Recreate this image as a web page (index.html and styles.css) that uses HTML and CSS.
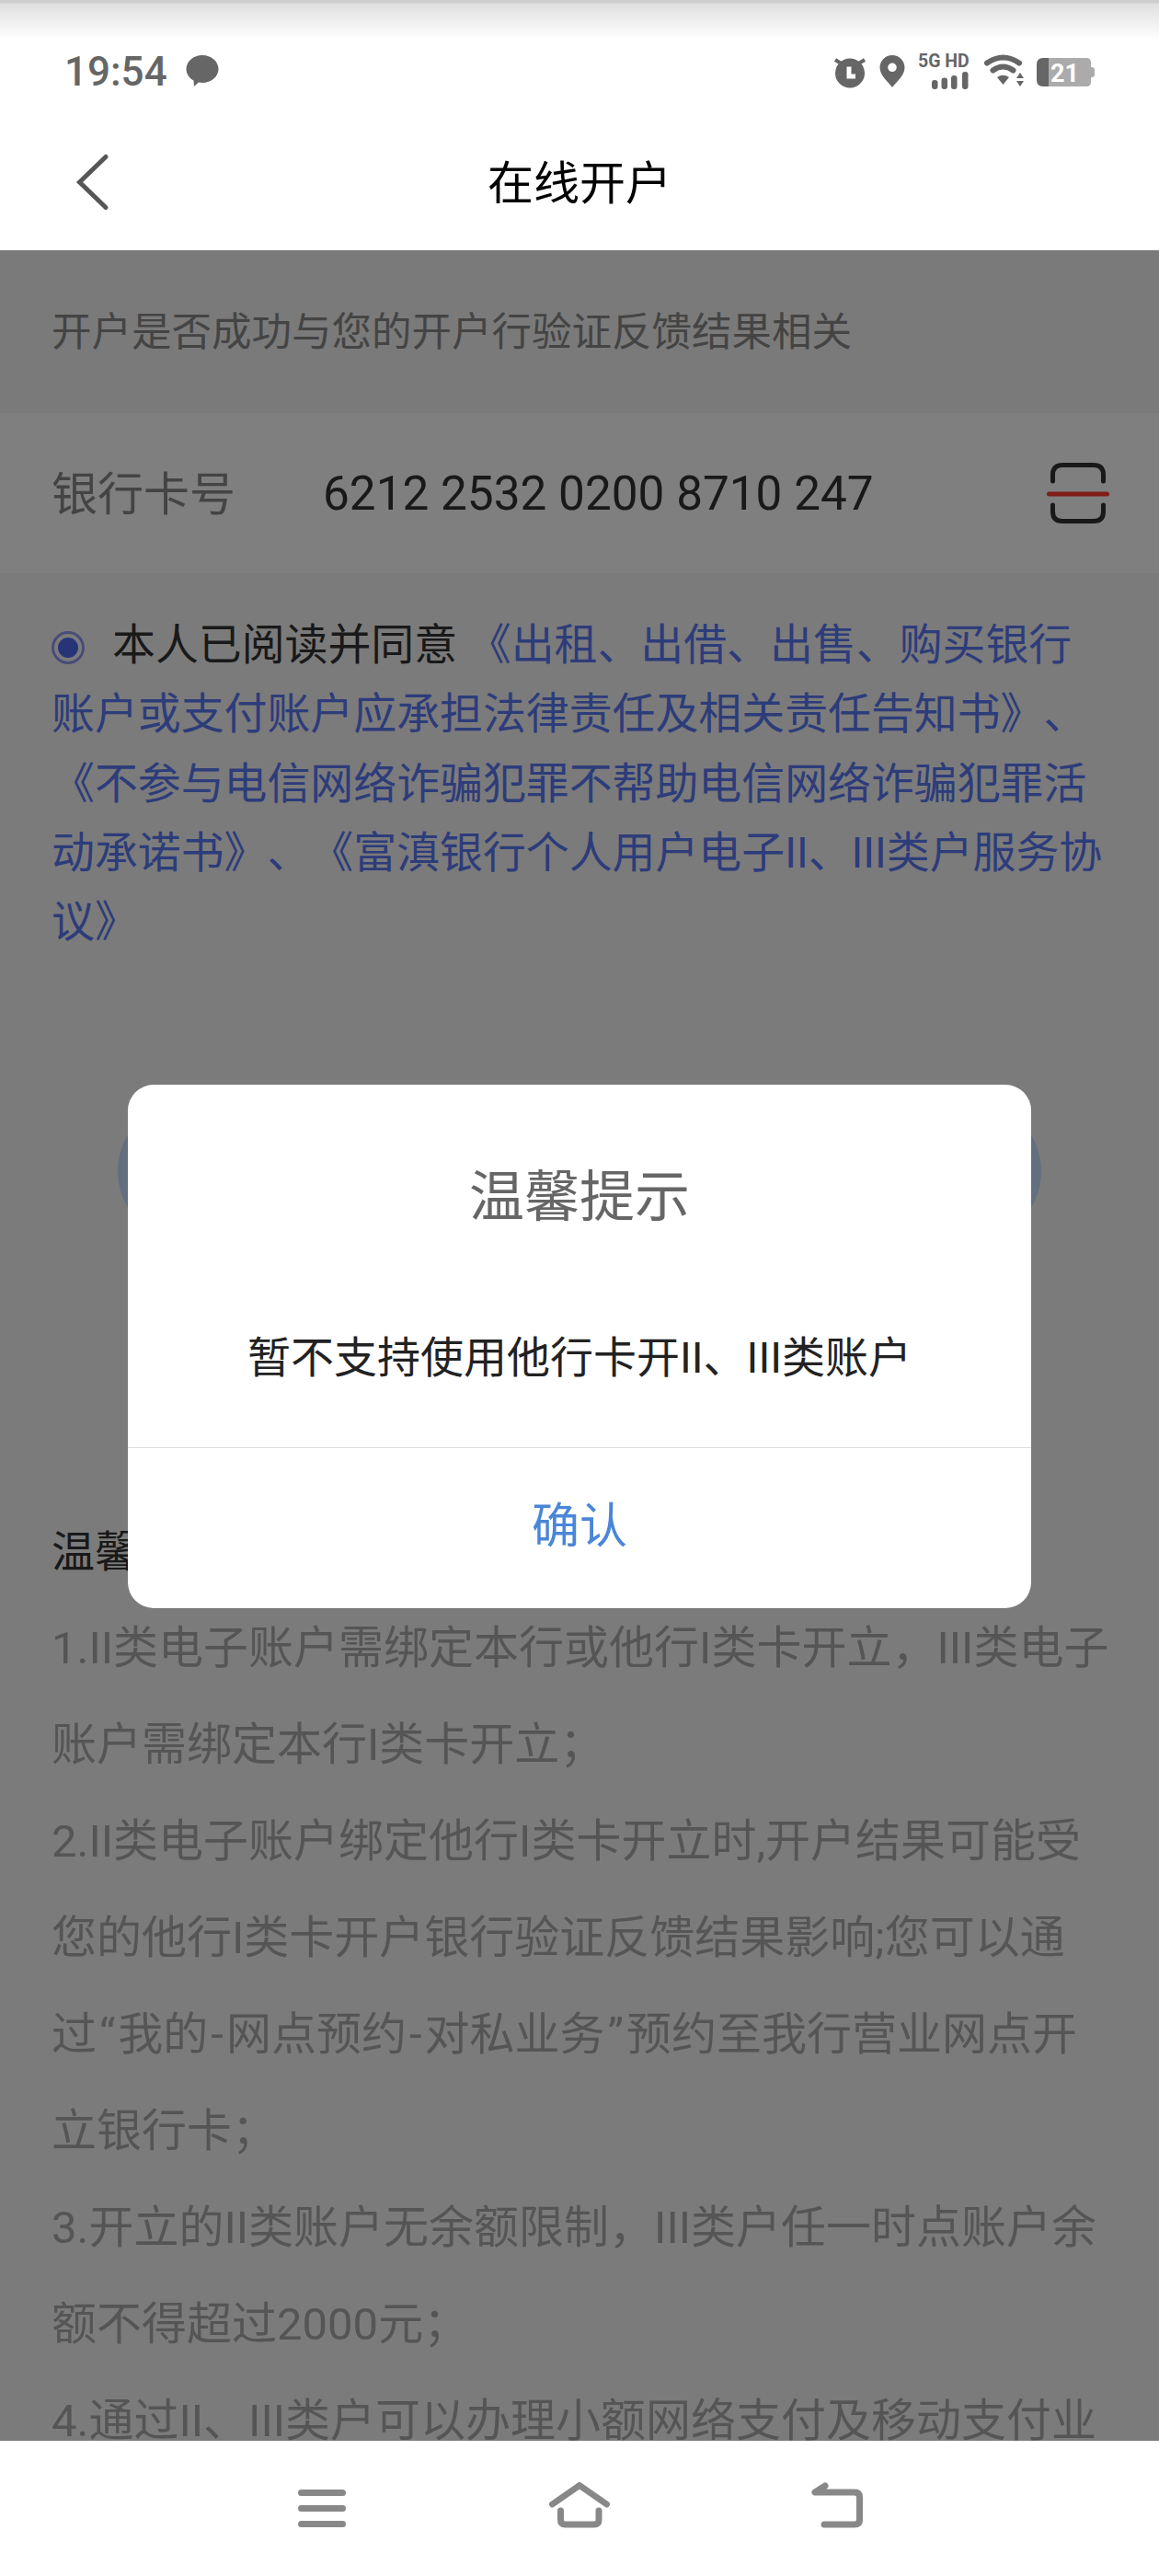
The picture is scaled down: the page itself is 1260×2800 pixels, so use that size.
FILE: index.html
```html
<!DOCTYPE html>
<html lang="zh-CN">
<head>
<meta charset="utf-8">
<title>在线开户</title>
<link rel="stylesheet" href="styles.css">
</head>
<body>
<div class="page">
  <header class="status">
    <span class="time">19:54</span>
    <svg class="ico-bubble" width="36" height="40" viewBox="0 0 36 40"><path class="fill-grey" d="M18 2C27.6 2 35.500 8.700 35.500 17C35.500 25.300 27.600 32 18 32C16.500 32 15 31.800 13.800 31.500L9 36L8.500 29.500C3.700 26.800 .5 22.200 .5 17C.5 8.700 8.400 2 18 2Z"/></svg>
    <div class="status-right">
      <svg width="38" height="40" viewBox="0 0 38 40"><circle class="fill-grey" cx="18" cy="21.500" r="16"/><path class="ears" d="M2 7L8.500 11M34 7L27.500 11"/><path class="clock-hand" d="M17 14.500V25H24"/></svg>
      <svg width="28" height="40" viewBox="0 0 28 40"><path class="fill-grey" fill-rule="evenodd" d="M14 2C21.500 2 27.500 8 27.500 15.500C27.500 24 19 30.500 14 37C9 30.500 .5 24 .5 15.500C.5 8 6.500 2 14 2ZM14 10.500A4.800 4.800 0 1 0 14 20.100A4.800 4.800 0 1 0 14 10.500Z"/></svg>
      <svg class="net-ico" width="60" height="40" viewBox="0 0 60 40"><text class="net" x="0" y="14.500">5G HD</text><rect class="fill-grey" x="15" y="29" width="6.500" height="10" rx="3"/><rect class="fill-grey" x="25.500" y="26.500" width="6.500" height="12.500" rx="3"/><rect class="fill-grey" x="36" y="24" width="6.500" height="15" rx="3"/><rect class="fill-grey" x="48" y="20" width="6.500" height="19" rx="3"/></svg>
      <svg width="44" height="40" viewBox="0 0 44 40"><path class="wifi" d="M3 10.500Q20.500 -1.500 38 10.500M9.500 18.500Q20.500 10.500 31.500 18.500"/><path class="fill-grey" d="M14 26Q20.500 21.500 27 26L20.500 34ZM35 27L39 21L43 27ZM35 30H43L39 36Z"/></svg>
      <svg width="64" height="40" viewBox="0 0 64 40"><path class="batt-body" d="M14 5H55Q60 5 60 10V31Q60 36 55 36H14Z"/><path class="fill-grey" d="M14 5H8Q1 5 1 12V29Q1 36 8 36H14Z"/><path class="batt-body" d="M60 15H61Q64 15 64 18V23Q64 26 61 26H60Z"/><text class="batt-text" x="16" y="31">21</text></svg>
    </div>
  </header>

  <nav class="nav">
    <svg class="back" width="40" height="64" viewBox="0 0 40 64"><path d="M35 4.500L6.500 32L35 59.500"/></svg>
    <h1 class="title">在线开户</h1>
  </nav>

  <main class="content">
    <p class="tip">开户是否成功与您的开户行验证反馈结果相关</p>
    <div class="card-row">
      <span class="card-label">银行卡号</span>
      <span class="card-no">6212 2532 0200 8710 247</span>
      <svg class="scan" width="68" height="68" viewBox="0 0 68 68"><path class="scan-frame" d="M6.500 21V14Q6.500 3.500 17 3.500H51Q61.500 3.500 61.500 14V21M6.500 47V54Q6.500 64.500 17 64.500H51Q61.500 64.500 61.500 54V47"/><path class="scan-line" d="M2.500 35H65.500"/></svg>
    </div>
    <p class="agree"><svg class="radio" width="36" height="36" viewBox="0 0 36 36"><circle class="radio-ring" cx="18" cy="18" r="16.500"/><circle class="radio-dot" cx="18" cy="18" r="11"/></svg>本人已阅读并同意 <a class="link">《出租、出借、出售、购买银行账户或支付账户应承担法律责任及相关责任告知书》、《不参与电信网络诈骗犯罪不帮助电信网络诈骗犯罪活动承诺书》、《富滇银行个人用户电子II、III类户服务协议》</a></p>
    <div class="submit"></div>
    <h2 class="notice-title">温馨提示</h2>
    <div class="notice">
      <p>1.II类电子账户需绑定本行或他行I类卡开立，III类电子<br>账户需绑定本行I类卡开立；</p>
      <p>2.II类电子账户绑定他行I类卡开立时,开户结果可能受<br>您的他行I类卡开户银行验证反馈结果影响;您可以通<br>过<span class="punct">“</span>我的<span class="punct">-</span>网点预约<span class="punct">-</span>对私业务<span class="punct">”</span>预约至我行营业网点开<br>立银行卡；</p>
      <p>3.开立的II类账户无余额限制，III类户任一时点账户余<br>额不得超过2000元；</p>
      <p>4.通过II、III类户可以办理小额网络支付及移动支付业</p>
    </div>
    <div class="scrim">
      <section class="dialog">
        <div class="dialog-main">
          <h3 class="dialog-title">温馨提示</h3>
          <p class="dialog-text">暂不支持使用他行卡开II、III类账户</p>
        </div>
        <div class="dialog-btn">确认</div>
      </section>
    </div>
  </main>

  <footer class="softkeys">
    <svg class="key" width="70" height="52" viewBox="0 0 70 52"><path d="M12.500 11.500H57.500M12.500 28.500H57.500M12.500 45.500H57.500"/></svg>
    <svg class="key" width="70" height="52" viewBox="0 0 70 52"><path d="M5.500 24L35 3.500L64.500 24M14.500 31V41Q14.500 46 19.500 46H51Q56 46 56 41V31"/></svg>
    <svg class="key" width="70" height="52" viewBox="0 0 70 52"><path d="M22 4L11 11H54Q59.500 11 59.500 16.500V41Q59.500 46 54 46H21"/></svg>
  </footer>
</div>
</body>
</html>
```
FILE: styles.css
```css
* { box-sizing: border-box; }
html, body { margin: 0; padding: 0; background: #fff; }
body { font-family: Roboto, "Noto Sans CJK SC", sans-serif; text-spacing-trim: space-all; }
h1, h2, h3, p { margin: 0; font-weight: 400; }

.page { width: 1260px; height: 2800px; display: flex; flex-direction: column; overflow: hidden; }

/* status bar */
.status {
  height: 125px; flex: none; display: flex; align-items: flex-start; padding: 58px 70px 0;
  background: linear-gradient(#cfcfcf 0, #cfcfcf 3px, #dfdfdf 4px, #ffffff 44px);
}
.time { font: 500 44px/40px Roboto, sans-serif; color: #666; width: 112px; }
.ico-bubble { margin-left: 20px; }
.status-right { margin-left: auto; display: flex; gap: 12px; }
.fill-grey { fill: #666; }
.ears { stroke: #666; stroke-width: 4; fill: none; }
.clock-hand { stroke: #fff; stroke-width: 5; fill: none; }
.net-ico { overflow: visible; margin-left: 2px; }
.net { font: 700 19.500px Roboto, sans-serif; fill: #666; }
.wifi { stroke: #666; stroke-width: 6; fill: none; stroke-linecap: round; }
.batt-body { fill: #ababab; }
.batt-text { font: 700 27px Roboto, sans-serif; fill: #fff; }

/* nav */
.nav { height: 147px; flex: none; position: relative; display: flex; align-items: center; justify-content: center; padding-top: 3px; background: #fff; }
.back { position: absolute; left: 80px; top: 41px; }
.back path { stroke: #555; stroke-width: 5; fill: none; stroke-linecap: round; }
.title { font-size: 50px; line-height: 60px; color: #000; }

/* content */
.content { flex: 1; min-height: 0; position: relative; overflow: hidden; background: #f7f7f7; }
.tip { height: 177px; padding: 0 56px 6px; display: flex; align-items: center; font-size: 43.500px; color: #888; background: #f4f4f4; }
.card-row { height: 174px; padding: 0 54px 0 56px; display: flex; align-items: center; background: #fff; }
.card-label { width: 295px; margin-bottom: 6px; font-size: 50px; color: #888; }
.card-no { font-size: 51.300px; color: #333; }
.scan { margin-left: auto; }
.scan-frame { stroke: #333; stroke-width: 5; fill: none; stroke-linecap: round; }
.scan-line { stroke: #ff3c2d; stroke-width: 5; fill: none; stroke-linecap: round; }

.agree { padding: 40px 56px 0; font-size: 46.900px; line-height: 75.300px; color: #333; }
.radio { margin-right: 30px; vertical-align: -5px; }
.radio-ring { fill: none; stroke: #8e9bf0; stroke-width: 3; }
.radio-dot { fill: #4f68f0; }
.link { color: #5b78f5; }

.submit { margin: 156px 128px 0; height: 156px; border-radius: 78px; background: #c6dcff; }

.notice-title { margin-top: 283px; padding: 0 56px; font-size: 47px; line-height: 105px; color: #333; }
.notice { padding: 0 40px 0 56px; font-size: 49px; line-height: 105px; color: #aaa; }
.punct { padding: 0 3px; }

/* modal */
.scrim { position: absolute; inset: 0; display: flex; align-items: center; justify-content: center; padding-top: 2px; background: rgba(0, 0, 0, .5); }
.dialog { width: 982px; height: 569px; border-radius: 28px; background: #fff; display: flex; flex-direction: column; }
.dialog-main { height: 394px; flex: none; display: flex; flex-direction: column; align-items: center; padding-top: 83px; }
.dialog-title { font-size: 60px; line-height: 80px; color: #666; }
.dialog-text { margin-top: 94px; font-size: 47px; line-height: 80px; color: #222; }
.dialog-btn { flex: 1; border-top: 1px solid #ddd; display: flex; align-items: center; justify-content: center; padding-bottom: 14px; font-size: 52px; color: #4a86d8; }

/* soft keys */
.softkeys { height: 147px; flex: none; display: flex; justify-content: center; gap: 210px; padding-top: 45px; background: #fff; }
.key path { stroke: #888; stroke-width: 7; fill: none; stroke-linecap: round; stroke-linejoin: round; }
```
